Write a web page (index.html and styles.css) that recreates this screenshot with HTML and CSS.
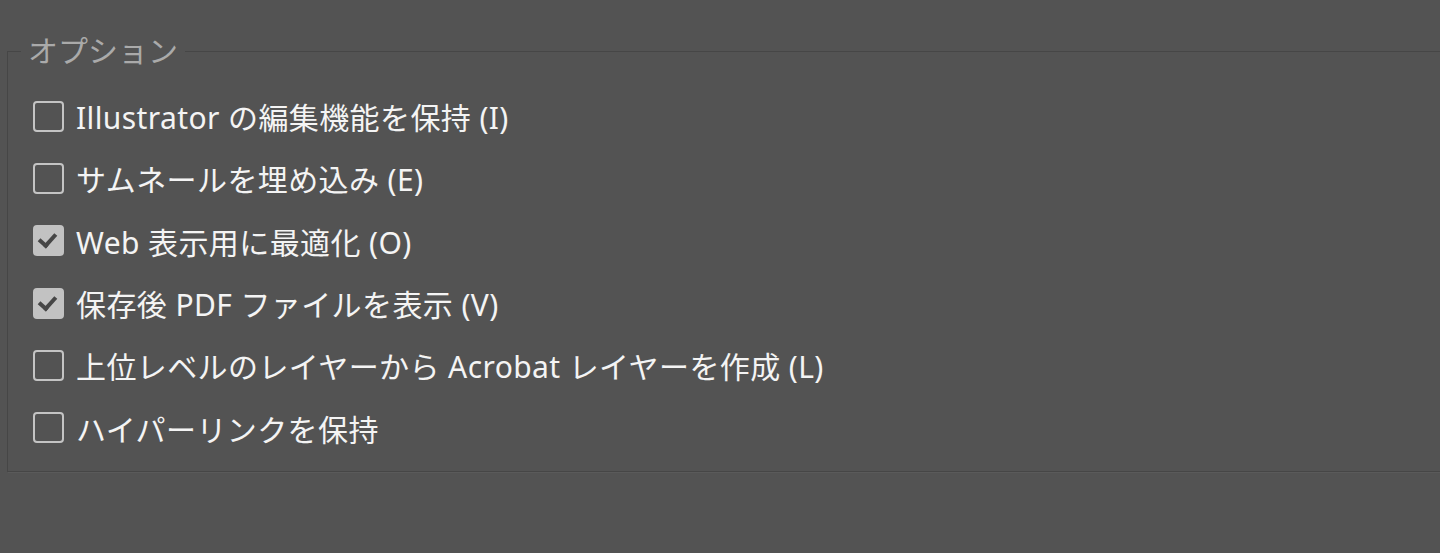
FILE: index.html
```html
<!DOCTYPE html>
<html lang="ja">
<head>
    <meta charset="UTF-8">
    <title>オプション</title>
    <link rel="stylesheet" href="styles.css">
</head>
<body>

    <fieldset class="group">
        <legend>オプション</legend>
        <label class="option"><span class="box"></span>Illustrator の編集機能を保持 (I)</label>
        <label class="option"><span class="box"></span>サムネールを埋め込み (E)</label>
        <label class="option"><span class="box checked"></span>Web 表示用に最適化 (O)</label>
        <label class="option"><span class="box checked"></span>保存後 PDF ファイルを表示 (V)</label>
        <label class="option"><span class="box"></span>上位レベルのレイヤーから Acrobat レイヤーを作成 (L)</label>
        <label class="option"><span class="box"></span>ハイパーリンクを保持</label>
    </fieldset>

</body>
</html>
```

FILE: styles.css
```css
html, body { margin: 0; height: 100%; }
body { background: #535353; font-family: "Noto Sans", "Noto Sans CJK JP", sans-serif; color: #f4f4f4; overflow: hidden; padding-top: 35px; box-sizing: border-box; }

.group { margin: 0 0 0 7px; width: 1500px; box-sizing: border-box; padding: 18px 0 16px 25px; border: 1px solid #464646; box-shadow: 1px 1px 0 #5a5a5a; display: flex; flex-direction: column; height: 437px; }
.group legend { font-size: 30px; line-height: 32px; color: #aaaaaa; padding: 0 7px; margin-left: -12px; }

.option { display: flex; align-items: center; flex: none; height: 62.3px; font-size: 30px; letter-spacing: 0.4px; cursor: default; }
.box { width: 27px; height: 27px; border: 2px solid #c4c4c4; border-radius: 4px; margin-right: 12px; flex: none; position: relative; }
.box.checked { background: #c2c2c2; border-color: #c2c2c2; }
.box.checked::after { content: ""; position: absolute; top: 6px; left: 4px; width: 13px; height: 7px; border-left: 4px solid #464646; border-bottom: 4px solid #464646; transform: rotate(-48deg); }
```
